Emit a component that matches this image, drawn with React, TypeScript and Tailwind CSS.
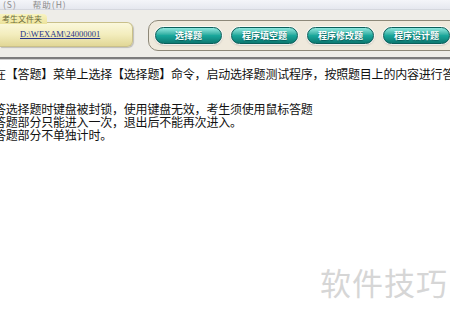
import React from "react";

const cjk = { fontFamily: '"Noto Sans CJK SC", "Noto Sans", sans-serif' };

function Btn({ label }: { label: string }) {
  return (
    <div
      className="w-[67px] h-[17px] rounded-full border border-[#0b5f5a] flex items-center justify-center text-white text-[9px] font-bold shadow-[0_0_0_1px_rgba(255,255,255,0.8),0_1px_2px_rgba(0,0,0,0.35)] bg-gradient-to-b from-[#8ee8df] via-[#1aa89c] to-[#0c7a72]"
      style={cjk}
    >
      <span className="leading-none [text-shadow:0_1px_1px_rgba(0,60,60,0.6)]">{label}</span>
    </div>
  );
}

export default function App() {
  return (
    <div className="relative w-[450px] h-[319px] overflow-hidden bg-white" style={cjk}>
      {/* menu bar */}
      <div className="h-[10px] bg-gradient-to-b from-[#f4f5f9] to-[#e6e8ef] border-b border-[#d5d7de] flex items-center text-[8.5px] leading-none text-[#8a8a8a] tracking-[1px]">
        <span className="ml-[3px]">(S)</span>
        <span className="ml-[16px]">帮助(H)</span>
      </div>
      {/* toolbar */}
      <div className="h-[47px] bg-[#eeede8] flex">
        <div className="w-[133px] flex flex-col pt-[4px]">
          <div className="w-[47px] h-[10px] bg-gradient-to-b from-[#f8f3c0] to-[#ece39c] rounded-tr-[4px] text-[8px] leading-[10px] text-[#6a6a3a] pl-[2px] z-10">
            考生文件夹
          </div>
          <div className="-mt-[2px] h-[25px] w-[133px] rounded-r-[6px] border border-l-0 border-[#c9c08a] bg-gradient-to-b from-[#fbf8dc] via-[#f3edbd] to-[#e1d796] flex items-center pl-[20px] shadow-[1px_1px_1px_rgba(0,0,0,0.2)]">
            <span className="text-[8.5px] leading-none text-[#27358a] underline" style={{ fontFamily: '"Liberation Serif", serif' }}>
              D:\WEXAM\24000001
            </span>
          </div>
        </div>
        <div className="ml-[15px] mt-[10px] h-[31px] flex-1 -mr-[10px] rounded-[10px] border border-[#8d8878] bg-[#efe9dc] flex items-center gap-[9px] pl-[6px]">
          <Btn label="选择题" />
          <Btn label="程序填空题" />
          <Btn label="程序修改题" />
          <Btn label="程序设计题" />
        </div>
      </div>
      {/* separator */}
      <div className="h-[2px] bg-[#7c7c7c]" />
      <div className="h-[1px] bg-[#d0d0d0]" />
      {/* content */}
      <div className="-ml-[6px] text-[12px] tracking-[-0.2px] text-[#111] whitespace-nowrap">
        <div className="mt-[7px] leading-[13px]">在【答题】菜单上选择【选择题】命令，启动选择题测试程序，按照题目上的内容进行答题。</div>
        <div className="mt-[22px] leading-[13px]">
          <div>答选择题时键盘被封锁，使用键盘无效，考生须使用鼠标答题</div>
          <div>答题部分只能进入一次，退出后不能再次进入。</div>
          <div>答题部分不单独计时。</div>
        </div>
      </div>
      {/* watermark */}
      <div className="absolute left-[320px] top-[266px] text-[31px] leading-none text-[#d6d6d6] tracking-[1px]">
        软件技巧
      </div>
    </div>
  );
}
